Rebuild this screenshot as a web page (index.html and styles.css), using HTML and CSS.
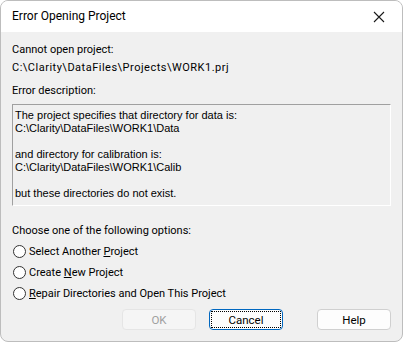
FILE: index.html
```html
<!DOCTYPE html>
<html>
  <head>
    <link rel="stylesheet" href="styles.css">
  </head>
  <body>
    <div class="window">
      <div class="titlebar">
        <span class="title">Error Opening Project</span>
        <button class="close-button" aria-label="Close">
          <svg width="12" height="12" viewBox="0 0 12 12">
            <path d="M1 1 L11 11 M11 1 L1 11" stroke="#1a1a1a" stroke-width="1.1" fill="none" />
          </svg>
        </button>
      </div>

      <div class="content">
        <div class="label">Cannot open project:</div>
        <div class="label path">C:\Clarity\DataFiles\Projects\WORK1.prj</div>

        <div class="label spaced">Error description:</div>
        <div class="description">
          <div>The project specifies that directory for data is:</div>
          <div>C:\Clarity\DataFiles\WORK1\Data</div>
          <div>&nbsp;</div>
          <div>and directory for calibration is:</div>
          <div>C:\Clarity\DataFiles\WORK1\Calib</div>
          <div>&nbsp;</div>
          <div>but these directories do not exist.</div>
        </div>

        <div class="label options-title">Choose one of the following options:</div>
        <div class="options">
          <label class="option"><span class="radio"></span><span>Select Another <u>P</u>roject</span></label>
          <label class="option"><span class="radio"></span><span>Create <u>N</u>ew Project</span></label>
          <label class="option"><span class="radio"></span><span><u>R</u>epair Directories and Open This Project</span></label>
        </div>

        <div class="buttons">
          <button class="dialog-button" disabled>OK</button>
          <button class="dialog-button default"><span class="focus">Cancel</span></button>
          <button class="dialog-button help">Help</button>
        </div>
      </div>
    </div>
  </body>
</html>
```

FILE: styles.css
```css
html {
  background-color: #ffffff;
}

body {
  margin: 0;
  font-family: Roboto, "Noto Sans", sans-serif;
  font-size: 11px;
  color: #000000;
}

.window {
  width: 401px;
  height: 340px;
  border: 1px solid #bdbdbd;
  border-radius: 8px;
  overflow: hidden;
  background-color: #f0f0f0;
  display: flex;
  flex-direction: column;
}

.titlebar {
  height: 31px;
  background-color: #ffffff;
  display: flex;
  align-items: center;
  justify-content: space-between;
  padding-left: 11px;
}

.title {
  font-size: 12px;
  margin-top: -1px;
}

.close-button {
  width: 46px;
  height: 31px;
  border: none;
  background: none;
  padding: 0;
  display: flex;
  align-items: center;
  justify-content: center;
}

.content {
  padding: 9px 11px 0 11px;
}

.label {
  line-height: 18px;
  white-space: nowrap;
}

.path {
  letter-spacing: 0.5px;
}

.spaced {
  margin-top: 5px;
}

.description {
  margin-top: 4px;
  height: 92px;
  border-top: 1px solid #a0a0a0;
  border-left: 1px solid #a0a0a0;
  border-bottom: 1px solid #ffffff;
  border-right: 1px solid #ffffff;
  padding: 4px 2px 4px 2px;
  font-family: "Liberation Sans", sans-serif;
  font-size: 11px;
  line-height: 13px;
}

.options-title {
  margin-top: 16px;
}

.options {
  display: flex;
  flex-direction: column;
  margin-top: 1px;
}

.option {
  height: 21px;
  display: flex;
  align-items: center;
  gap: 3px;
  white-space: nowrap;
}

.radio {
  width: 11px;
  height: 11px;
  border: 1px solid #333333;
  border-radius: 50%;
  background-color: #ffffff;
  margin-left: 1px;
}

.buttons {
  display: flex;
  justify-content: flex-end;
  gap: 13px;
  margin-top: 5px;
}

.dialog-button {
  width: 74px;
  height: 21px;
  border: 1px solid #d0d0d0;
  border-radius: 4px;
  background-color: #fdfdfd;
  font-family: Roboto, "Noto Sans", sans-serif;
  font-size: 11.5px;
  color: #000000;
  padding: 0;
  display: flex;
  align-items: center;
  justify-content: center;
}

.dialog-button:disabled {
  background-color: #f5f5f5;
  border-color: #e5e5e5;
  color: #a0a0a0;
}

.default {
  border-color: #0067c0;
  padding: 1px;
}

.focus {
  flex: 1;
  align-self: stretch;
  display: flex;
  align-items: center;
  justify-content: center;
  border: 1px dotted #000000;
}

.help {
  margin-left: 21px;
}
```
